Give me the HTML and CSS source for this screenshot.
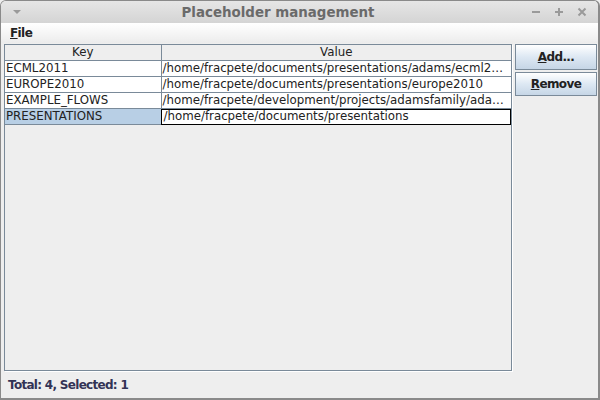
FILE: index.html
```html
<!DOCTYPE html>
<html>
<head>
<meta charset="utf-8">
<link rel="stylesheet" href="styles.css">
</head>
<body>
<div class="window">
  <div class="titlebar">
    <span class="tb-menu"></span>
    <span class="title">Placeholder management</span>
    <span class="tb-controls">
      <svg width="10" height="10" viewBox="0 0 10 10"><rect x="1" y="4" width="8" height="2" fill="#9a9a9a"/></svg>
      <svg width="10" height="10" viewBox="0 0 10 10"><rect x="1" y="4" width="8" height="2" fill="#9a9a9a"/><rect x="4" y="1" width="2" height="8" fill="#9a9a9a"/></svg>
      <svg width="10" height="10" viewBox="0 0 10 10"><path d="M1.5 1.5 L8.5 8.5 M8.5 1.5 L1.5 8.5" stroke="#9a9a9a" stroke-width="2"/></svg>
    </span>
  </div>
  <div class="menubar"><span class="menu"><u>F</u>ile</span></div>
  <div class="main">
    <div class="pane">
      <table class="grid">
        <colgroup><col class="c-key"><col class="c-val"></colgroup>
        <thead><tr><th>Key</th><th>Value</th></tr></thead>
        <tbody>
          <tr><td>ECML2011</td><td>/home/fracpete/documents/presentations/adams/ecml2…</td></tr>
          <tr><td>EUROPE2010</td><td>/home/fracpete/documents/presentations/europe2010</td></tr>
          <tr><td>EXAMPLE_FLOWS</td><td>/home/fracpete/development/projects/adamsfamily/ada…</td></tr>
          <tr class="sel"><td>PRESENTATIONS</td><td class="focus">/home/fracpete/documents/presentations</td></tr>
        </tbody>
      </table>
    </div>
    <div class="buttons">
      <button class="btn"><u>A</u>dd...</button>
      <button class="btn"><u>R</u>emove</button>
    </div>
  </div>
  <div class="status">Total: 4, Selected: 1</div>
</div>
</body>
</html>
```
FILE: styles.css
```css
html, body { margin: 0; padding: 0; }
body { width: 600px; height: 400px; overflow: hidden; background: #eeeeee; font-family: "DejaVu Sans", sans-serif; }
.window {
  width: 600px; height: 400px; box-sizing: border-box;
  border: 1px solid #8a8a8a; border-right-width: 2px; border-bottom-width: 2px;
  border-radius: 6px 6px 0 0;
  background: #eeeeee;
  display: flex; flex-direction: column; overflow: hidden;
}
.titlebar {
  height: 22px; flex: none;
  background: linear-gradient(#e6e6e6, #d4d4d4);
  display: flex; align-items: center; position: relative;
}
.tb-menu {
  width: 0; height: 0; margin-left: 12px;
  border-left: 4px solid transparent; border-right: 4px solid transparent;
  border-top: 4px solid #9a9a9a;
}
.title {
  flex: 1; text-align: center; font-weight: bold; font-size: 13.4px; color: #6a6a6a;
  padding-left: 4px;
}
.tb-controls { display: flex; gap: 13px; margin-right: 11px; }
.menubar {
  height: 20px; flex: none;
  background: linear-gradient(#ffffff, #ececec);
  display: flex; align-items: center;
}
.menu { font-size: 12px; letter-spacing: -0.6px; font-weight: bold; color: #222; margin-left: 9px; }
.main { flex: 1; display: flex; padding: 1px 1px 0 3px; gap: 3px; min-height: 0; }
.pane {
  width: 506px; height: 325px;
  border: 1px solid #7a8a99;
  box-shadow: 1px 1px 0 #ffffff;
  background: #eeeeee;
}
.grid { border-collapse: collapse; table-layout: fixed; width: 506px; font-size: 11.8px; color: #222; }
.c-key { width: 156px; }
.grid th {
  height: 15px; padding: 0; font-weight: normal; background: #eeeeee;
  border-right: 1px solid #7a8a99; border-bottom: 1px solid #7a8a99; line-height: 15px;
}
.grid th:last-child { border-right: none; }
.grid td {
  height: 15px; padding: 0 0 0 1px; line-height: 15px; background: #ffffff;
  border-right: 1px solid #7a8a99; border-bottom: 1px solid #7a8a99;
  white-space: nowrap; overflow: hidden;
}
.grid td:last-child { border-right: none; }
.grid tr.sel td:first-child { background: #b8cfe5; }
.grid td.focus { outline: 1px solid #000; outline-offset: -1px; padding-left: 2px; }
.buttons { display: flex; flex-direction: column; gap: 2px; width: 83px; }
.btn {
  height: 26px; margin: 0; padding: 0;
  border: 1px solid #7a8a99; border-radius: 0;
  background: linear-gradient(#ffffff, #dde8f3 50%, #c6d6e6);
  font-family: "DejaVu Sans", sans-serif; font-size: 12px; letter-spacing: -0.6px; font-weight: bold; color: #222;
}
.btn + .btn { height: 24px; }
.status {
  height: 27px; flex: none; display: flex; align-items: center;
  padding-left: 7px; font-size: 12px; letter-spacing: -0.7px; font-weight: bold; color: #333355;
}
```
